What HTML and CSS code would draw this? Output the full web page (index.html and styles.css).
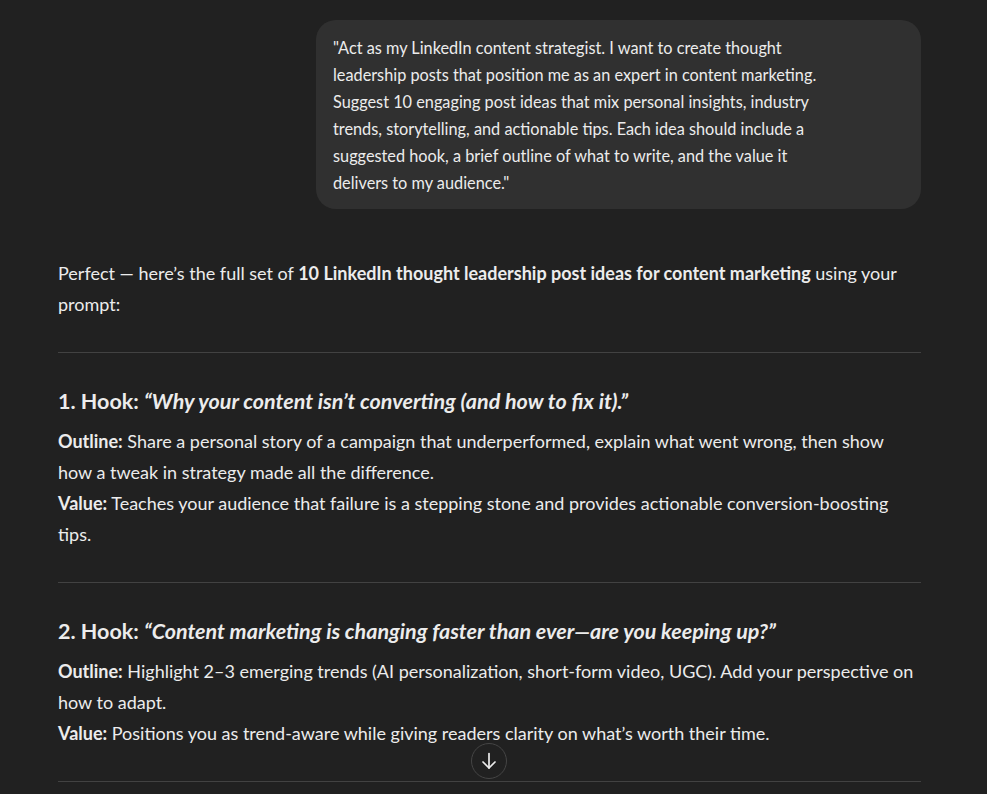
FILE: index.html
```html
<!DOCTYPE html>
<html lang="en">
<head>
<meta charset="utf-8">
<title>Chat</title>
<link rel="stylesheet" href="styles.css">
</head>
<body>
<main class="thread">
  <div class="user-row">
    <div class="bubble"><div class="bubble-text">"Act as my LinkedIn content strategist. I want to create thought leadership posts that position me as an expert in content marketing. Suggest 10 engaging post ideas that mix personal insights, industry trends, storytelling, and actionable tips. Each idea should include a suggested hook, a brief outline of what to write, and the value it delivers to my audience."</div></div>
  </div>
  <div class="answer">
    <p class="intro">Perfect — here’s the full set of <strong>10 LinkedIn thought leadership post ideas for content marketing</strong> using your prompt:</p>
    <hr>
    <h3>1. Hook: <em>“Why your content isn’t converting (and how to fix it).”</em></h3>
    <p><strong>Outline:</strong> Share a personal story of a campaign that underperformed, explain what went wrong, then show how a tweak in strategy made all the difference.<br><strong>Value:</strong> Teaches your audience that failure is a stepping stone and provides actionable conversion-boosting tips.</p>
    <hr>
    <h3>2. Hook: <em>“Content marketing is changing faster than ever—are you keeping up?”</em></h3>
    <p><strong>Outline:</strong> Highlight 2–3 emerging trends (AI personalization, short-form video, UGC). Add your perspective on how to adapt.<br><strong>Value:</strong> Positions you as trend-aware while giving readers clarity on what’s worth their time.</p>
    <hr>
  </div>
</main>
<button class="scroll-down" aria-label="Scroll down">
  <svg width="22" height="22" viewBox="0 0 22 22" fill="none" stroke="#ececec" stroke-width="1.7" stroke-linecap="round" stroke-linejoin="round"><path d="M11 3.5v14.5"/><path d="M5 12l6 6 6-6"/></svg>
</button>
</body>
</html>
```
FILE: styles.css
```css
html, body {
  margin: 0;
  padding: 0;
  background: #212121;
  height: 100%;
  overflow: hidden;
}
body {
  font-family: "Lato", "Open Sans", sans-serif;
  color: #ececec;
  position: relative;
}
.thread {
  width: 863px;
  margin-left: 58px;
  padding-top: 20px;
  display: flex;
  flex-direction: column;
}
.user-row {
  display: flex;
  justify-content: flex-end;
}
.bubble {
  width: 605px;
  box-sizing: border-box;
  background: #303030;
  border-radius: 20px;
  padding: 13.5px 17px;
  font-size: 16.3px;
  line-height: 27px;
}
.bubble-text {
  width: 488px;
}
.answer {
  margin-top: 49px;
  font-size: 18px;
  line-height: 31px;
}
.answer p {
  margin: 0;
}
.answer strong {
  font-weight: 700;
}
.answer hr {
  border: none;
  border-top: 1px solid #424242;
  margin: 32px 0 0;
  height: 0;
}
.answer h3 {
  font-size: 21.5px;
  line-height: 28px;
  font-weight: 700;
  margin: 34px 0 11px;
}
.answer h3 em {
  font-style: italic;
}
.scroll-down {
  position: absolute;
  left: 471px;
  top: 743px;
  width: 36px;
  height: 36px;
  border-radius: 50%;
  border: 1px solid #454545;
  background: #212121;
  display: flex;
  align-items: center;
  justify-content: center;
  padding: 0;
}
```
